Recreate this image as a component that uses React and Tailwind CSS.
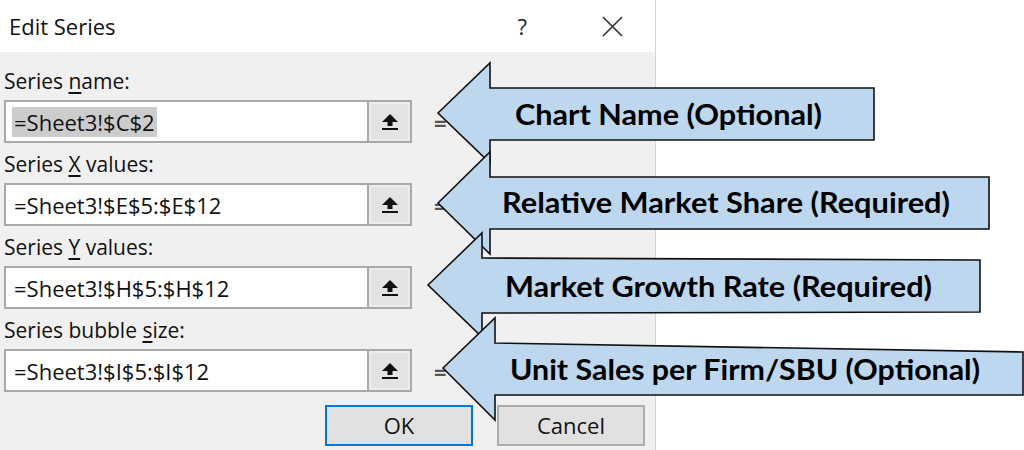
const uiFont = { fontFamily: '"Open Sans", "Noto Sans", sans-serif' };

const fields = [
  { pre: "Series ", key: "n", post: "ame:", value: "=Sheet3!$C$2", selected: true },
  { pre: "Series ", key: "X", post: " values:", value: "=Sheet3!$E$5:$E$12" },
  { pre: "Series ", key: "Y", post: " values:", value: "=Sheet3!$H$5:$H$12" },
  { pre: "Series bubble ", key: "s", post: "ize:", value: "=Sheet3!$I$5:$I$12" },
];

const callouts = [
  {
    points: "438,113 490,63 490,88 874,88 874,140 490,140 490,163",
    label: "Chart Name (Optional)",
    x: 515,
    y: 125,
    w: 307,
  },
  {
    points: "438,203 490,152 490,177 989,177 989,229 490,229 490,254",
    label: "Relative Market Share (Required)",
    x: 502,
    y: 213,
    w: 448,
  },
  {
    points: "428,285 482,233 482,258 980,260 980,312 482,313 482,337",
    label: "Market Growth Rate (Required)",
    x: 505,
    y: 297,
    w: 427,
  },
  {
    points: "443,368 495,318 495,343 1023,352 1023,395 495,395 495,420",
    label: "Unit Sales per Firm/SBU (Optional)",
    x: 510,
    y: 380,
    w: 470,
  },
];

function UploadIcon() {
  return (
    <svg width="18" height="18" viewBox="0 0 18 18">
      <polygon points="9,1 17,9 11.5,9 11.5,13 6.5,13 6.5,9 1,9" fill="#111" />
      <rect x="1" y="15" width="16" height="2" fill="#111" />
    </svg>
  );
}

function Field({ field }) {
  return (
    <div className="flex flex-col">
      <div className="h-[26px] text-[21px] leading-[26px] text-[#111]">
        {field.pre}
        <span className="underline underline-offset-[3px]">{field.key}</span>
        {field.post}
      </div>
      <div className="mt-[6px] flex items-center">
        <div className="flex h-[43px] w-[408px] border-2 border-[#a9a9a9] bg-white">
          <div className="flex flex-1 items-center pl-[6px]">
            <span
              className={`px-[2px] text-[22px] leading-[30px] text-[#111] ${
                field.selected ? "bg-[#cccccc]" : ""
              }`}
            >
              {field.value}
            </span>
          </div>
          <div className="flex w-[43px] items-center justify-center border-l-2 border-[#a9a9a9] bg-[#e3e3e3] shadow-[inset_0_0_0_2px_#ececec]">
            <UploadIcon />
          </div>
        </div>
        <span className="ml-[22px] text-[22px] font-bold leading-none text-[#555]">=</span>
      </div>
    </div>
  );
}

export default function App() {
  return (
    <div className="relative h-[450px] w-[1024px] overflow-hidden bg-white" style={uiFont}>
      <div className="flex h-full w-[656px] flex-col border-r border-[#d4d4d4]">
        <div className="flex h-[52px] items-center bg-white pl-[9px] pr-[32px]">
          <span className="text-[22px] text-[#111]">Edit Series</span>
          <span className="ml-auto mr-[75px] text-[22px] text-[#222]">?</span>
          <svg width="21" height="21" viewBox="0 0 21 21">
            <path d="M1 1 L20 20 M20 1 L1 20" stroke="#333" strokeWidth="1.7" />
          </svg>
        </div>

        <div className="flex flex-1 flex-col gap-[8px] bg-[#f0f0f0] px-[4px] pt-[16px]">
          {fields.map((f) => (
            <Field key={f.value} field={f} />
          ))}

          <div className="mt-[5px] flex justify-end gap-[24px] pr-[6px]">
            <button className="h-[41px] w-[148px] border-2 border-[#0078d7] bg-[#e1e1e1] text-[22px] text-[#111]">
              OK
            </button>
            <button className="h-[41px] w-[148px] border-2 border-[#adadad] bg-[#e1e1e1] text-[22px] text-[#111]">
              Cancel
            </button>
          </div>
        </div>
      </div>

      <svg
        className="pointer-events-none absolute inset-0"
        width="1024"
        height="450"
        viewBox="0 0 1024 450"
      >
        {callouts.map((c) => (
          <g key={c.label}>
            <polygon points={c.points} fill="#bdd7ee" stroke="#111" strokeWidth="1.6" strokeLinejoin="miter" />
            <text
              x={c.x}
              y={c.y}
              textLength={c.w}
              lengthAdjust="spacingAndGlyphs"
              fill="#000"
              style={{ fontFamily: 'Lato, "Open Sans", sans-serif', fontWeight: 700, fontSize: 28 }}
            >
              {c.label}
            </text>
          </g>
        ))}
      </svg>
    </div>
  );
}
